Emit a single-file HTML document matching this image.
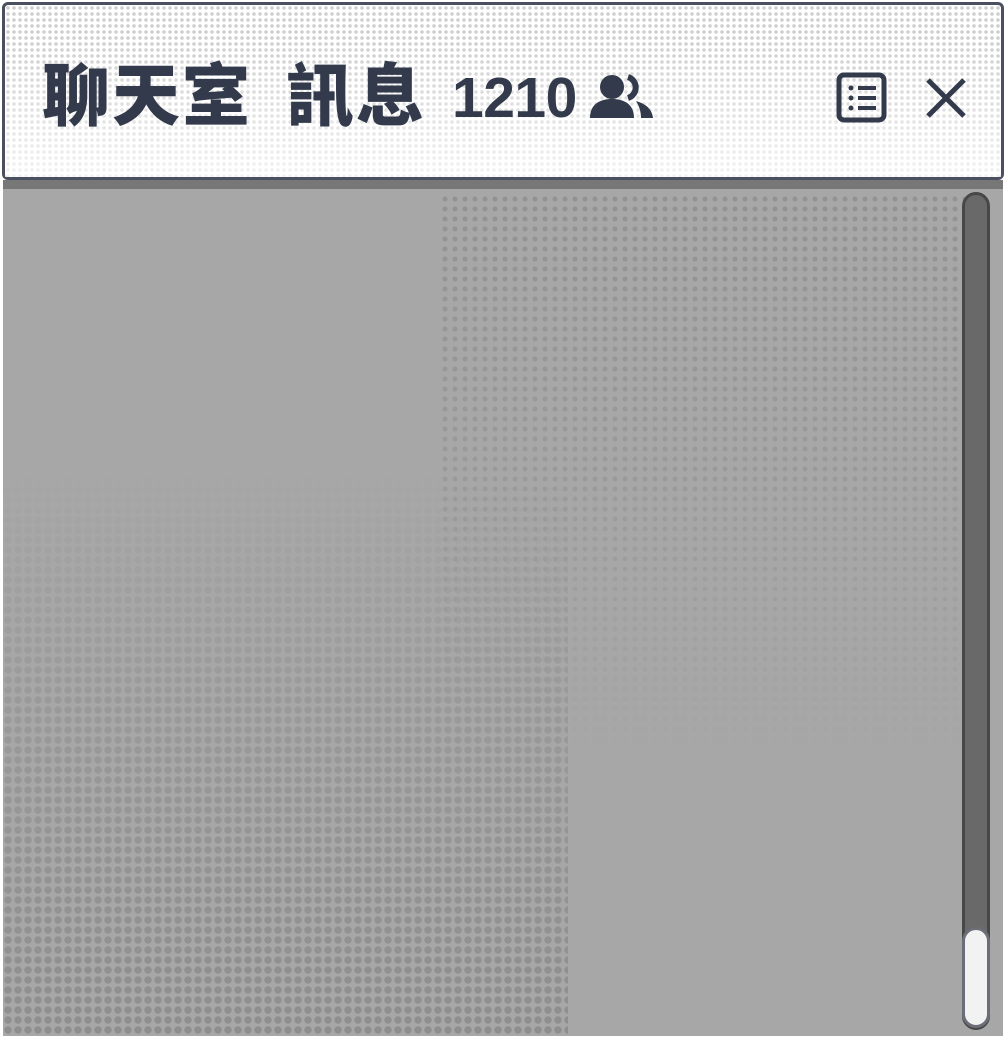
<!DOCTYPE html>
<html><head><meta charset="utf-8"><style>
html,body{margin:0;padding:0;width:1006px;height:1039px;background:#fff;overflow:hidden;position:relative}
.body{position:absolute;left:3px;top:180px;width:1000px;height:856px;background:#a7a7a7;overflow:hidden}
.strip{position:absolute;left:3px;top:180px;width:1000px;height:9px;background:#777}
.dots1{position:absolute;left:437px;top:14px;width:525px;height:565px;
background-image:radial-gradient(circle,#929292 2.2px,transparent 2.8px);background-size:10px 10px;
-webkit-mask-image:linear-gradient(to bottom,#000 0%,rgba(0,0,0,.6) 50%,transparent 100%);mask-image:linear-gradient(to bottom,#000 0%,rgba(0,0,0,.6) 50%,transparent 100%)}
.dots2{position:absolute;left:0;top:295px;width:565px;height:561px;
background-image:radial-gradient(circle,#8e8e8e 3.4px,transparent 4px);background-size:10px 10px;
-webkit-mask-image:linear-gradient(to bottom,transparent 0%,rgba(0,0,0,.5) 40%,#000 100%);mask-image:linear-gradient(to bottom,transparent 0%,rgba(0,0,0,.5) 40%,#000 100%)}
.head{position:absolute;left:2px;top:2px;width:996px;height:172px;border:3px solid #4a5060;border-radius:6px;
background-color:#fff;background-image:radial-gradient(circle,#cfcfcf 1.6px,transparent 2px);background-size:6px 6px;}
.head:after{content:"";position:absolute;inset:0;background:linear-gradient(to bottom,rgba(255,255,255,0) 20%,rgba(255,255,255,.75) 100%)}
.c{position:absolute;top:48px;font-family:"Noto Sans CJK TC",sans-serif;font-weight:900;font-size:68px;color:#323a4b;line-height:86px;z-index:2}
.num{position:absolute;left:452px;top:66px;font-family:"Liberation Sans",sans-serif;font-weight:bold;font-size:57px;color:#323a4b;line-height:64px;z-index:2;letter-spacing:-0.5px}
svg{position:absolute;z-index:2}
.track{position:absolute;left:962px;top:192px;width:22px;height:832px;background:#696969;border:3px solid #474747;border-radius:14px}
.thumb{position:absolute;left:962px;top:927px;width:22px;height:95px;background:#f2f2f2;border:3px solid #6b6e78;border-radius:14px}
</style></head><body>
<div class="strip"></div>
<div class="body"><div class="dots1"></div><div class="dots2"></div></div>
<div class="strip"></div>
<div class="head"></div>
<div class="c" style="left:42px">聊</div>
<div class="c" style="left:112px">天</div>
<div class="c" style="left:182px">室</div>
<div class="c" style="left:286px">訊</div>
<div class="c" style="left:356px">息</div>
<div class="num">1210</div>
<svg style="left:590px;top:74px" width="66" height="46" viewBox="0 0 66 46"><circle cx="22" cy="13" r="12" fill="#323a4b"/><path d="M0 44c0-14 10-19 22-19s22 5 22 19z" fill="#323a4b"/><path d="M38 3a11 11 0 0 1 0 21" stroke="#323a4b" stroke-width="6" fill="none"/><path d="M46 27c10 3 16 8 17 17h-12c0-7-2-12-5-17z" fill="#323a4b"/></svg>
<svg style="left:836px;top:72px" width="52" height="52" viewBox="0 0 52 52"><rect x="3" y="3" width="45" height="45" rx="5" fill="none" stroke="#323a4b" stroke-width="5"/><circle cx="15" cy="16" r="2.5" fill="#323a4b"/><circle cx="15" cy="26" r="2.5" fill="#323a4b"/><circle cx="15" cy="36" r="2.5" fill="#323a4b"/><path d="M22 16h18M22 26h18M22 36h18" stroke="#323a4b" stroke-width="4"/></svg>
<svg style="left:924px;top:76px" width="44" height="44" viewBox="0 0 44 44"><path d="M4 4L40 40M40 4L4 40" stroke="#323a4b" stroke-width="5"/></svg>
<div class="track"></div>
<div class="thumb"></div>
</body></html>
